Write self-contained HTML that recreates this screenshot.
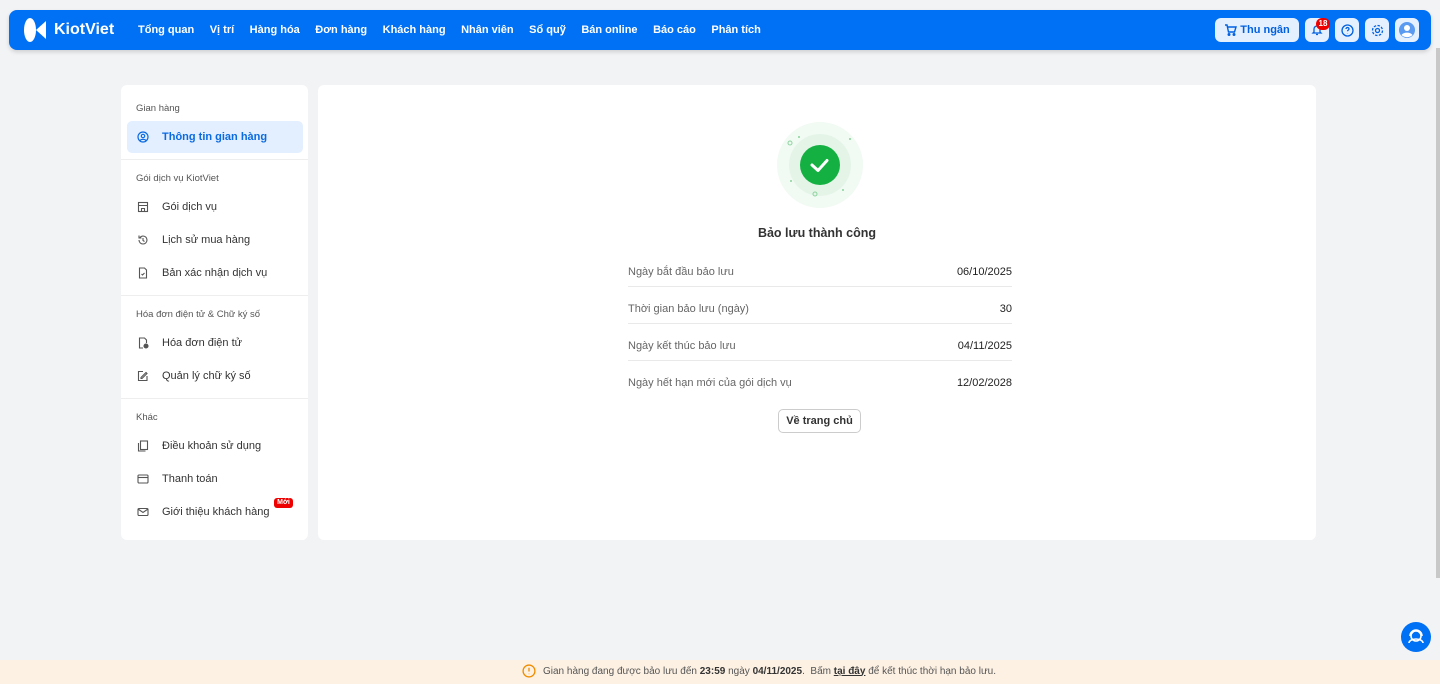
<!DOCTYPE html>
<html><head><meta charset="utf-8"><style>
*{box-sizing:border-box;margin:0;padding:0}
body{width:1440px;height:684px;background:#f2f3f5;font-family:"Liberation Sans","Noto Sans CJK SC",sans-serif;position:relative;overflow:hidden;color:#222}
.hdr{position:absolute;left:9px;top:10px;width:1422px;height:40px;background:#0070f4;border-radius:8px;box-shadow:0 2px 4px rgba(0,0,0,.15)}
.logo{position:absolute;left:13px;top:7px;display:flex;align-items:center;color:#fff;font-weight:bold;font-size:16px}
.nav{position:absolute;left:129px;top:14px;display:flex;gap:15.5px;color:#fff;font-size:11px;font-weight:bold}
.rb{position:absolute;top:8px;height:24px;background:#e5f0fe;border-radius:6px;display:flex;align-items:center;justify-content:center;color:#0060e0}
.side{position:absolute;left:121px;top:85px;width:187px;height:455px;background:#fff;border-radius:6px}
.sec{font-size:9.5px;color:#555;padding-left:15px;position:absolute}
.it{position:absolute;left:16px;font-size:11px;color:#333;display:flex;align-items:center;gap:13px}
.it svg{width:12px;height:12px}
.hr{position:absolute;left:0;width:187px;height:1px;background:#eee}
.main{position:absolute;left:318px;top:85px;width:998px;height:455px;background:#fff;border-radius:6px}
.row{position:absolute;left:310px;width:384px;font-size:11px;display:flex;justify-content:space-between;color:#666;border-bottom:1px solid #e9e9e9;height:37px;padding-top:16px}
.row b{color:#222;font-weight:normal}
.foot{position:absolute;left:0;top:660px;width:1440px;height:24px;background:#fdf1e3;font-size:10px;color:#555}
</style></head><body>
<div class="hdr">
 <div class="logo"><svg width="26" height="26" viewBox="0 0 26 26"><ellipse cx="8" cy="13" rx="6" ry="12" fill="#fff"/><path d="M24 4 L14 13 L24 22 Z" fill="#fff"/></svg><span style="margin-left:6px">KiotViet</span></div>
 <div class="nav"><span>Tổng quan</span><span>Vị trí</span><span>Hàng hóa</span><span>Đơn hàng</span><span>Khách hàng</span><span>Nhân viên</span><span>Sổ quỹ</span><span>Bán online</span><span>Báo cáo</span><span>Phân tích</span></div>
 <div class="rb" style="left:1206px;width:84px;font-size:11px;font-weight:bold"><svg width="13" height="12" viewBox="0 0 13 12" fill="none" stroke="#0060e0" stroke-width="1.4"><path d="M1 1h2l1.5 7h6l1.5-5H4"/><circle cx="5" cy="10.5" r=".8"/><circle cx="10" cy="10.5" r=".8"/></svg>&nbsp;Thu ngân</div>
 <div class="rb" style="left:1296px;width:24px"><svg width="12" height="12" viewBox="0 0 12 12" fill="none" stroke="#0060e0" stroke-width="1.3"><path d="M3 8V5a3 3 0 016 0v3l1 1H2zM5 10.5h2"/></svg></div>
 <div style="position:absolute;left:1307px;top:8px;width:14px;height:12px;border-radius:6px;background:#e00;color:#fff;font-size:8px;font-weight:bold;text-align:center;line-height:12px">18</div>
 <div class="rb" style="left:1326px;width:24px"><svg width="13" height="13" viewBox="0 0 13 13" fill="none" stroke="#0060e0" stroke-width="1.3"><circle cx="6.5" cy="6.5" r="5.5"/><path d="M5 5a1.5 1.5 0 113 0c0 1-1.5 1-1.5 2.2M6.5 9v.3"/></svg></div>
 <div class="rb" style="left:1356px;width:24px"><svg width="13" height="13" viewBox="0 0 13 13" fill="none" stroke="#0060e0" stroke-width="1.3"><circle cx="6.5" cy="6.5" r="2"/><circle cx="6.5" cy="6.5" r="5" stroke-dasharray="2.5 1.4"/></svg></div>
 <div class="rb" style="left:1386px;width:24px"><svg width="16" height="16" viewBox="0 0 16 16"><circle cx="8" cy="8" r="8" fill="#5a9af0"/><circle cx="8" cy="6" r="3" fill="#fff"/><path d="M2.5 13a6 4 0 0111 0 8 8 0 01-11 0z" fill="#fff"/></svg></div>
</div>
<div style="position:absolute;left:1436px;top:48px;width:4px;height:530px;background:#c8c8c8"></div>

<div class="side">
 <div class="sec" style="top:18px">Gian hàng</div>
 <div style="position:absolute;left:6px;top:36px;width:176px;height:32px;background:#e3efff;border-radius:5px"></div>
 <div class="it" style="top:46px;color:#0a6ae0;font-weight:bold"><svg viewBox="0 0 12 12" fill="none" stroke="#0a6ae0" stroke-width="1.2"><circle cx="6" cy="6" r="5"/><circle cx="6" cy="5" r="1.7"/><path d="M3 9.5a3.5 2.5 0 016 0"/></svg>Thông tin gian hàng</div>
 <div class="hr" style="top:74px"></div>
 <div class="sec" style="top:88px">Gói dịch vụ KiotViet</div>
 <div class="it" style="top:116px"><svg viewBox="0 0 12 12" fill="none" stroke="#555" stroke-width="1.1"><rect x="1.5" y="1.5" width="9" height="9"/><path d="M1.5 4.5h9M4.5 10.5v-3h3v3"/></svg>Gói dịch vụ</div>
 <div class="it" style="top:149px"><svg viewBox="0 0 12 12" fill="none" stroke="#555" stroke-width="1.1"><path d="M2 6a4 4 0 104-4 4 4 0 00-3 1.5M2 1.5v2.5h2.5M6 4v2.5l1.5 1"/></svg>Lịch sử mua hàng</div>
 <div class="it" style="top:182px"><svg viewBox="0 0 12 12" fill="none" stroke="#555" stroke-width="1.1"><path d="M2.5 1h5l2 2v8h-7z"/><path d="M4.5 7l1 1 2-2"/></svg>Bản xác nhận dịch vụ</div>
 <div class="hr" style="top:210px"></div>
 <div class="sec" style="top:224px">Hóa đơn điện tử &amp; Chữ ký số</div>
 <div class="it" style="top:252px"><svg viewBox="0 0 12 12" fill="none" stroke="#555" stroke-width="1.1"><path d="M6 11H2.5V1h5l2 2v3"/><circle cx="9" cy="9" r="2" fill="#555"/></svg>Hóa đơn điện tử</div>
 <div class="it" style="top:285px"><svg viewBox="0 0 12 12" fill="none" stroke="#555" stroke-width="1.1"><path d="M10 6v4.5H1.5v-9H6M4 7.5l5-5 1 1-5 5H4z"/></svg>Quản lý chữ ký số</div>
 <div class="hr" style="top:313px"></div>
 <div class="sec" style="top:327px">Khác</div>
 <div class="it" style="top:355px"><svg viewBox="0 0 12 12" fill="none" stroke="#555" stroke-width="1.1"><rect x="3.5" y="1" width="7" height="8.5"/><path d="M1.5 3v8h7"/></svg>Điều khoản sử dụng</div>
 <div class="it" style="top:388px"><svg viewBox="0 0 12 12" fill="none" stroke="#555" stroke-width="1.1"><rect x="1" y="2" width="10" height="8" rx="1"/><path d="M1 4.5h10"/></svg>Thanh toán</div>
 <div class="it" style="top:421px"><svg viewBox="0 0 12 12" fill="none" stroke="#555" stroke-width="1.1"><rect x="1" y="2.5" width="10" height="7" rx="1"/><path d="M1 3l5 3.5L11 3"/></svg>Giới thiệu khách hàng</div>
 <div style="position:absolute;left:153px;top:413px;width:19px;height:10px;background:#e00;border-radius:3px;color:#fff;font-size:7px;font-weight:bold;text-align:center;line-height:10px">Mới</div>
</div>

<div class="main">
 <svg style="position:absolute;left:458px;top:36px" width="88" height="88" viewBox="0 0 88 88"><circle cx="44" cy="44" r="43" fill="#f1faf3"/><circle cx="44" cy="44" r="31" fill="#e4f5e8"/><circle cx="44" cy="44" r="20" fill="#14b042"/><path d="M36 44l6 5.5 9-10" fill="none" stroke="#fff" stroke-width="3" stroke-linecap="round" stroke-linejoin="round"/><circle cx="14" cy="22" r="2" fill="none" stroke="#8cd39e" stroke-width="1"/><circle cx="39" cy="73" r="2" fill="none" stroke="#8cd39e" stroke-width="1"/><circle cx="23" cy="16" r="1" fill="#8cd39e"/><circle cx="74" cy="18" r="1" fill="#8cd39e"/><circle cx="15" cy="60" r="1" fill="#8cd39e"/><circle cx="67" cy="69" r="1" fill="#8cd39e"/></svg>
 <div style="position:absolute;left:0;width:998px;top:141px;text-align:center;font-size:12.5px;font-weight:bold;color:#333">Bảo lưu thành công</div>
 <div class="row" style="top:165px"><span>Ngày bắt đầu bảo lưu</span><b>06/10/2025</b></div>
 <div class="row" style="top:202px"><span>Thời gian bảo lưu (ngày)</span><b>30</b></div>
 <div class="row" style="top:239px"><span>Ngày kết thúc bảo lưu</span><b>04/11/2025</b></div>
 <div class="row" style="top:276px;border:none"><span>Ngày hết hạn mới của gói dịch vụ</span><b>12/02/2028</b></div>
 <div style="position:absolute;left:460px;top:324px;width:83px;height:24px;border:1px solid #ccc;border-radius:5px;font-size:11px;font-weight:bold;text-align:center;line-height:22px;color:#333">Về trang chủ</div>
</div>

<div style="position:absolute;left:1401px;top:622px;width:30px;height:30px;border-radius:50%;background:#0070f4"><svg width="30" height="30" viewBox="0 0 30 30" fill="none" stroke="#fff" stroke-width="1.6"><circle cx="15" cy="14" r="5"/><path d="M8 21a7 4 0 0114 0M9 14a6 6 0 0112 0"/></svg></div>

<div class="foot"><div style="position:absolute;left:522px;top:4px;display:flex;align-items:center;gap:7px;white-space:nowrap"><svg width="14" height="14" viewBox="0 0 13 13" fill="none" stroke="#f08c00" stroke-width="1.2"><circle cx="6.5" cy="6.5" r="5.5"/><path d="M6.5 3.5v3.5M6.5 9v.4"/></svg><span>Gian hàng đang được bảo lưu đến <b style="color:#333">23:59</b> ngày <b style="color:#333">04/11/2025</b>.&nbsp; Bấm <b style="text-decoration:underline;color:#333">tại đây</b> để kết thúc thời hạn bảo lưu.</span></div></div>
</body></html>
